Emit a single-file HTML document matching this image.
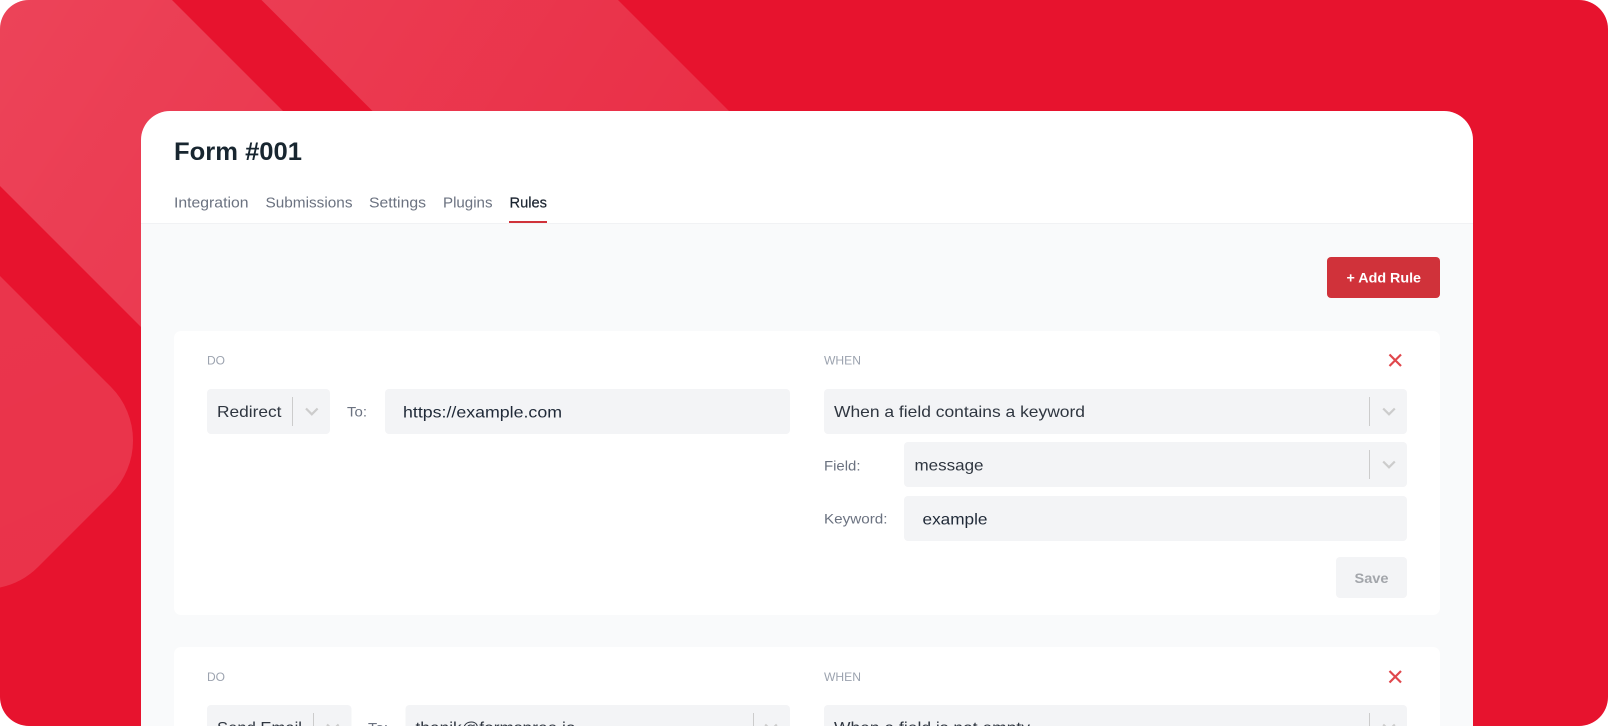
<!DOCTYPE html>
<html lang="en">
<head>
<meta charset="utf-8">
<title>Form #001</title>
<style>
html,body{margin:0;padding:0;background:#fff;width:1608px;height:726px;overflow:hidden}
svg{display:block}
text{font-family:"Liberation Sans",Arial,sans-serif;white-space:pre}
.tab{font-size:14.4px;fill:#6b7280}
.lab{font-size:12px;fill:#9ca3af}
.sm{font-size:14px;fill:#6b7280}
.val{font-size:16px;fill:#2f3640}
.inp{font-size:16px;fill:#1f2937}
.fld{fill:#f3f4f6}
.div{fill:#cccccc}
.chev{fill:none;stroke:#cccccc;stroke-width:2.2}
.x{fill:none;stroke:#e0474c;stroke-width:2.2}
</style>
</head>
<body>
<svg xmlns="http://www.w3.org/2000/svg" width="1608" height="726" viewBox="0 0 1608 726">
<defs>
<clipPath id="outer"><rect width="1608" height="726" rx="29" ry="29"/></clipPath>
<clipPath id="panel"><path d="M141 726V140a29 29 0 0 1 29-29H1444a29 29 0 0 1 29 29V726Z"/></clipPath>
<linearGradient id="g" gradientUnits="userSpaceOnUse" x1="0" y1="0" x2="760" y2="500">
<stop offset="0" stop-color="#fff" stop-opacity=".205"/>
<stop offset="1" stop-color="#fff" stop-opacity=".09"/>
</linearGradient>
<linearGradient id="g2" gradientUnits="userSpaceOnUse" x1="0" y1="280" x2="130" y2="560">
<stop offset="0" stop-color="#fff" stop-opacity=".145"/>
<stop offset="1" stop-color="#fff" stop-opacity=".135"/>
</linearGradient>
</defs>

<g clip-path="url(#outer)">
<rect width="1608" height="726" fill="#e7132e"/>
<path d="M0 0H172L500 328H142L0 186Z" fill="url(#g)"/>
<path d="M261.5 0H618L860 242H503.5Z" fill="url(#g)"/>
<path d="M0 276L110.8 386.8A76 76 0 0 1 110.8 494.2L38 567A76 76 0 0 1 0 587.5Z" fill="url(#g2)"/>

<g clip-path="url(#panel)">
<rect x="141" y="111" width="1332" height="615" fill="#ffffff"/>
<rect x="141" y="224" width="1332" height="502" fill="#f9fafb"/>
<rect x="141" y="223" width="1332" height="1" fill="#f1f2f4"/>
</g>
</g>

<text x="174" y="160" font-size="25" font-weight="700" fill="#182630" textLength="128" lengthAdjust="spacingAndGlyphs">Form #001</text>

<text class="tab" x="174" y="207.5" textLength="74.5" lengthAdjust="spacingAndGlyphs">Integration</text>
<text class="tab" x="265.5" y="207.5" textLength="87" lengthAdjust="spacingAndGlyphs">Submissions</text>
<text class="tab" x="369" y="207.5" textLength="57" lengthAdjust="spacingAndGlyphs">Settings</text>
<text class="tab" x="443" y="207.5" textLength="49.5" lengthAdjust="spacingAndGlyphs">Plugins</text>
<text class="tab" x="509.5" y="207.5" textLength="37.5" lengthAdjust="spacingAndGlyphs" style="fill:#1b2430;stroke:#1b2430;stroke-width:.2">Rules</text>
<rect x="509" y="221" width="38" height="2" fill="#d0323a"/>

<rect x="1327" y="257" width="113" height="41" rx="4" fill="#d0323a"/>
<text x="1346.5" y="282.5" font-size="14" font-weight="700" fill="#ffffff" textLength="74.5" lengthAdjust="spacingAndGlyphs">+ Add Rule</text>

<!-- Card 1 -->
<rect x="174" y="331" width="1266" height="284" rx="7" fill="#ffffff"/>
<text class="lab" x="207" y="364.5" textLength="18" lengthAdjust="spacingAndGlyphs">DO</text>
<text class="lab" x="824" y="364.5" textLength="37" lengthAdjust="spacingAndGlyphs">WHEN</text>
<path class="x" d="M1389.5 354.5L1401 366M1401 354.5L1389.5 366"/>

<rect class="fld" x="207" y="389" width="123" height="45" rx="4"/>
<text class="val" x="217" y="417" textLength="64.5" lengthAdjust="spacingAndGlyphs">Redirect</text>
<rect class="div" x="292" y="397" width="1" height="29"/>
<path class="chev" d="M306 408.5L311.8 414.3L317.6 408.5"/>
<text class="sm" x="347" y="416.5" textLength="20" lengthAdjust="spacingAndGlyphs">To:</text>
<rect class="fld" x="385" y="389" width="405" height="45" rx="4"/>
<text class="inp" x="403" y="417.5" textLength="159" lengthAdjust="spacingAndGlyphs">https://example.com</text>

<rect class="fld" x="824" y="389" width="583" height="45" rx="4"/>
<text class="val" x="834" y="417" textLength="251" lengthAdjust="spacingAndGlyphs">When a field contains a keyword</text>
<rect class="div" x="1369" y="397" width="1" height="29"/>
<path class="chev" d="M1383.2 408.5L1389 414.3L1394.8 408.5"/>

<text class="sm" x="824" y="470.5" textLength="36.5" lengthAdjust="spacingAndGlyphs">Field:</text>
<rect class="fld" x="904" y="442" width="503" height="45" rx="4"/>
<text class="val" x="914.5" y="470.5" textLength="69" lengthAdjust="spacingAndGlyphs">message</text>
<rect class="div" x="1369" y="450" width="1" height="29"/>
<path class="chev" d="M1383.2 461.5L1389 467.3L1394.8 461.5"/>

<text class="sm" x="824" y="523.5" textLength="63.5" lengthAdjust="spacingAndGlyphs">Keyword:</text>
<rect class="fld" x="904" y="496" width="503" height="45" rx="4"/>
<text class="inp" x="922.5" y="524.5" textLength="65" lengthAdjust="spacingAndGlyphs">example</text>

<rect class="fld" x="1336" y="557" width="71" height="41" rx="4"/>
<text x="1354.5" y="583" font-size="14" font-weight="700" fill="#a3a6ab" textLength="34" lengthAdjust="spacingAndGlyphs">Save</text>

<!-- Card 2 -->
<rect x="174" y="647" width="1266" height="100" rx="7" fill="#ffffff"/>
<text class="lab" x="207" y="681" textLength="18" lengthAdjust="spacingAndGlyphs">DO</text>
<text class="lab" x="824" y="681" textLength="37" lengthAdjust="spacingAndGlyphs">WHEN</text>
<path class="x" d="M1389.5 671L1401 682.5M1401 671L1389.5 682.5"/>

<rect class="fld" x="207" y="705" width="144.5" height="45" rx="4"/>
<text class="val" x="217" y="733" textLength="85" lengthAdjust="spacingAndGlyphs">Send Email</text>
<rect class="div" x="313" y="713" width="1" height="29"/>
<path class="chev" d="M327 724.5L332.8 730.3L338.6 724.5"/>
<text class="sm" x="368" y="732.5" textLength="20" lengthAdjust="spacingAndGlyphs">To:</text>
<rect class="fld" x="405.5" y="705" width="384.5" height="45" rx="4"/>
<text class="val" x="415.5" y="733" textLength="160" lengthAdjust="spacingAndGlyphs">thanik@formspree.io</text>
<rect class="div" x="753" y="713" width="1" height="29"/>
<path class="chev" d="M765.2 724.5L771 730.3L776.8 724.5"/>

<rect class="fld" x="824" y="705" width="583" height="45" rx="4"/>
<text class="val" x="834" y="733" textLength="196" lengthAdjust="spacingAndGlyphs">When a field is not empty</text>
<rect class="div" x="1369" y="713" width="1" height="29"/>
<path class="chev" d="M1383.2 724.5L1389 730.3L1394.8 724.5"/>
</svg>
</body>
</html>
